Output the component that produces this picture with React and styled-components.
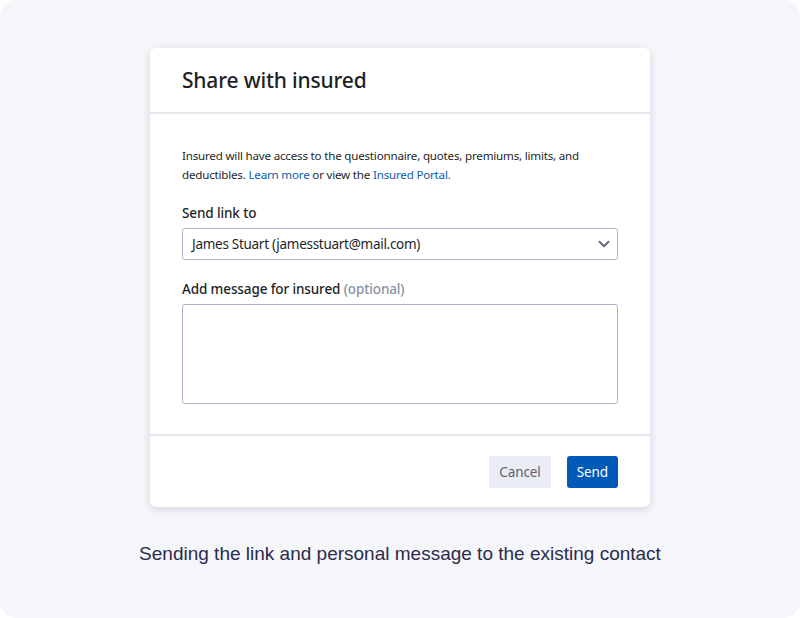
import styled, { createGlobalStyle } from "styled-components";

const Global = createGlobalStyle`
  body {
    margin: 0;
    background: #fff;
    font-family: "Noto Sans", "Open Sans", sans-serif;
  }
`;

const ChevronDown = () => (
  <svg width="14" height="14" viewBox="0 0 14 14" fill="none">
    <path d="M2.5 4.8L7 9.2l4.5-4.4" stroke="#626a7e" strokeWidth="2" strokeLinecap="round" strokeLinejoin="round" />
  </svg>
);

const App = () => {
  return (
    <>
      <Global />
      <Page>
        <Card>
          <Header>
            <Title>Share with insured</Title>
          </Header>
          <Body>
            <Intro>
              Insured will have access to the questionnaire, quotes, premiums, limits, and
              deductibles. <Link>Learn more</Link> or view the <Link>Insured Portal.</Link>
            </Intro>
            <Field>
              <Label>Send link to</Label>
              <Select>
                <span>James Stuart (jamesstuart@mail.com)</span>
                <ChevronDown />
              </Select>
            </Field>
            <Field>
              <Label>
                Add message for insured <Optional>(optional)</Optional>
              </Label>
              <TextArea />
            </Field>
          </Body>
          <Footer>
            <Button>Cancel</Button>
            <Button primary>Send</Button>
          </Footer>
        </Card>
        <Caption>Sending the link and personal message to the existing contact</Caption>
      </Page>
    </>
  );
};

const Page = styled.div`
  width: 800px;
  height: 618px;
  box-sizing: border-box;
  background: #f5f6fa;
  border-radius: 16px;
  padding-top: 48px;
  display: flex;
  flex-direction: column;
  align-items: center;
`;
const Card = styled.div`
  width: 500px;
  background: #fff;
  border-radius: 6px;
  box-shadow: 0 2px 8px rgba(30, 40, 70, 0.16);
`;
const Header = styled.div`
  height: 64px;
  padding: 0 32px;
  display: flex;
  align-items: center;
  border-bottom: 2px solid #e6e8ec;
`;
const Title = styled.h1`
  margin: 0;
  font-size: 21px;
  font-weight: 500;
  letter-spacing: -0.18px;
  color: #1e1f26;
`;
const Body = styled.div`
  padding: 32px 32px 30px;
  display: flex;
  flex-direction: column;
  gap: 19px;
  border-bottom: 2px solid #e6e8ec;
`;
const Intro = styled.p`
  margin: 0;
  font-size: 11.6px;
  letter-spacing: -0.2px;
  line-height: 19px;
  color: #1e1f26;
`;
const Link = styled.a`
  color: #0b5bb0;
  cursor: pointer;
`;
const Field = styled.div`
  display: flex;
  flex-direction: column;
  gap: 5px;
`;
const Label = styled.label`
  font-size: 13.5px;
  letter-spacing: -0.12px;
  line-height: 20px;
  font-weight: 500;
  color: #1e1f26;
`;
const Optional = styled.span`
  color: #8891a6;
`;
const Select = styled.div`
  height: 32px;
  box-sizing: border-box;
  border: 1px solid #a8b3c7;
  border-radius: 3px;
  padding: 0 6px 0 9px;
  display: flex;
  align-items: center;
  justify-content: space-between;
  font-size: 13.5px;
  letter-spacing: -0.28px;
  color: #1e1f26;
`;
const TextArea = styled.div`
  height: 100px;
  box-sizing: border-box;
  border: 1px solid #a8b3c7;
  border-radius: 3px;
`;
const Footer = styled.div`
  padding: 20px 32px 19px;
  display: flex;
  justify-content: flex-end;
  gap: 16px;
`;
const Button = styled.button`
  height: 32px;
  padding: 0 10px;
  border: none;
  border-radius: 3px;
  font-family: inherit;
  font-size: 13.5px;
  letter-spacing: -0.1px;
  background: ${(p) => (p.primary ? "#005ab8" : "#e9ecf3")};
  color: ${(p) => (p.primary ? "#fff" : "#5d6372")};
`;
const Caption = styled.div`
  margin-top: 36px;
  font-family: "Liberation Sans", Arial, sans-serif;
  font-size: 19px;
  color: #2b2c4a;
`;

export default App;
